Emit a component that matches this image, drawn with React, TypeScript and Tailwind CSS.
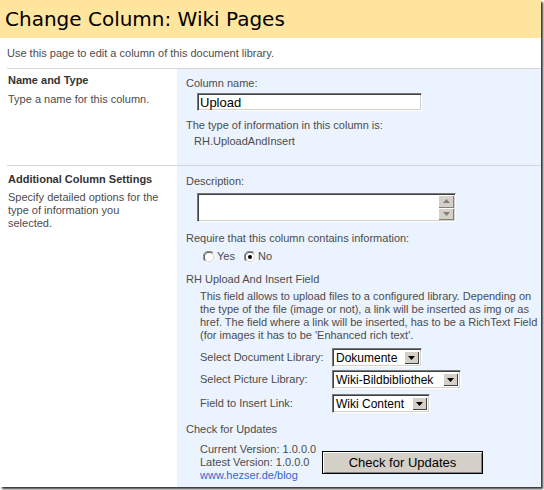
import type { ReactNode } from 'react';

function Radio({ checked = false }: { checked?: boolean }) {
  return (
    <svg width="12" height="12" viewBox="0 0 12 12" className="shrink-0">
      <circle cx="6" cy="6" r="5.5" fill="#fff" />
      <path d="M1.8 10.2 A5.5 5.5 0 0 1 10.2 1.8" fill="none" stroke="#808080" strokeWidth="1" />
      <path d="M2.6 9.4 A4.5 4.5 0 0 1 9.4 2.6" fill="none" stroke="#404040" strokeWidth="1" />
      <path d="M10.2 1.8 A5.5 5.5 0 0 1 1.8 10.2" fill="none" stroke="#ffffff" strokeWidth="1" />
      <path d="M9.4 2.6 A4.5 4.5 0 0 1 2.6 9.4" fill="none" stroke="#d4d0c8" strokeWidth="1" />
      {checked && <circle cx="6" cy="6" r="2" fill="#000" />}
    </svg>
  );
}

function Arrow({ dir = 'down', color = '#000' }: { dir?: 'up' | 'down'; color?: string }) {
  return (
    <svg width="7" height="4" viewBox="0 0 7 4">
      <path d={dir === 'down' ? 'M0 0 H7 L3.5 4 Z' : 'M0 4 H7 L3.5 0 Z'} fill={color} />
    </svg>
  );
}

function Select({ value, width }: { value: string; width: string }) {
  return (
    <div
      className={`${width} h-[19px] flex items-stretch bg-white border border-t-[#7a7a7a] border-l-[#7a7a7a] border-b-white border-r-white shadow-[inset_1px_1px_0_#404040,inset_-1px_-1px_0_#d4d0c8] p-[2px] pl-[3px] font-['Liberation_Sans',Arial,sans-serif] text-[12px] leading-[15px] text-black`}
    >
      <div className="flex-1 whitespace-nowrap">{value}</div>
      <div className="w-[15px] shrink-0 bg-[#d4d0c8] flex items-center justify-center shadow-[inset_1px_1px_0_#fff,inset_-1px_-1px_0_#404040]">
        <Arrow />
      </div>
    </div>
  );
}

function Section({ height, left, children }: { height?: string; left: ReactNode; children: ReactNode }) {
  return (
    <div className={`ml-[7px] border-t border-[#d6d6d6] flex ${height ?? 'flex-1'}`}>
      <div className="w-[170px] pl-[1px]">{left}</div>
      <div className="flex-1 bg-[#ebf3ff] pl-[9px]">{children}</div>
    </div>
  );
}

export default function App() {
  return (
    <div className="w-[544px] h-[490px] bg-white font-['Liberation_Sans',Arial,sans-serif] text-[11px] leading-[13px] text-[#4c4c4c]">
      <div className="w-[541px] h-[487px] flex flex-col bg-white shadow-[2px_2px_2px_rgba(0,0,0,0.8)] overflow-hidden">
        <header className="h-[38px] shrink-0 bg-[#ffe59d] pl-[5px] flex items-center">
          <h1 className="font-['DejaVu_Sans',sans-serif] text-[20px] leading-none text-black">
            Change Column: Wiki Pages
          </h1>
        </header>

        <p className="pl-[7px] pt-[9px] pb-[8px]">Use this page to edit a column of this document library.</p>

        <Section
          height="h-[97px] shrink-0"
          left={
            <div className="pt-[5px]">
              <div className="font-bold text-[#333]">Name and Type</div>
              <div className="mt-[6px]">Type a name for this column.</div>
            </div>
          }
        >
          <div className="pt-[8px]">
            <div>Column name:</div>
            <div className="mt-[3px] ml-[11px] w-[225px] h-[18px] bg-white border border-t-[#7a7a7a] border-l-[#7a7a7a] border-b-white border-r-white shadow-[inset_1px_1px_0_#404040,inset_-1px_-1px_0_#d4d0c8] pl-[2px] pt-[1px] text-[13px] leading-[15px] text-black">
              Upload
            </div>
            <div className="mt-[8px]">The type of information in this column is:</div>
            <div className="mt-[3px] pl-[8px]">RH.UploadAndInsert</div>
          </div>
        </Section>

        <Section
          left={
            <div className="pt-[7px]">
              <div className="font-bold text-[#333]">Additional Column Settings</div>
              <div className="mt-[5px]">
                Specify detailed options for the
                <br />
                type of information you
                <br />
                selected.
              </div>
            </div>
          }
        >
          <div className="pt-[9px]">
            <div>Description:</div>
            <div className="mt-[5px] ml-[11px] w-[259px] h-[29px] flex bg-white border border-t-[#7a7a7a] border-l-[#7a7a7a] border-b-white border-r-white shadow-[inset_1px_1px_0_#404040,inset_-1px_-1px_0_#d4d0c8] p-[1px]">
              <div className="flex-1" />
              <div className="w-[16px] flex flex-col bg-[#d4d0c8]">
                <div className="flex-1 flex items-center justify-center shadow-[inset_1px_1px_0_#fff,inset_-1px_-1px_0_#808080]">
                  <Arrow dir="up" color="#808080" />
                </div>
                <div className="flex-1 flex items-center justify-center shadow-[inset_1px_1px_0_#fff,inset_-1px_-1px_0_#808080]">
                  <Arrow color="#808080" />
                </div>
              </div>
            </div>
            <div className="mt-[10px]">Require that this column contains information:</div>
            <div className="mt-[5px] ml-[17px] flex items-center">
              <Radio />
              <span className="ml-[2px]">Yes</span>
              <span className="ml-[9px]" />
              <Radio checked />
              <span className="ml-[2px]">No</span>
            </div>

            <div className="mt-[10px]">RH Upload And Insert Field</div>
            <div className="mt-[4px] pl-[14px] whitespace-nowrap">
              This field allows to upload files to a configured library. Depending on
              <br />
              the type of the file (image or not), a link will be inserted as img or as
              <br />
              href. The field where a link will be inserted, has to be a RichText Field
              <br />
              (for images it has to be 'Enhanced rich text'.
            </div>

            <div className="pl-[14px]">
              <div className="mt-[6px] flex items-center">
                <div className="w-[132px]">Select Document Library:</div>
                <Select value="Dokumente" width="w-[90px]" />
              </div>
              <div className="mt-[3px] flex items-center">
                <div className="w-[132px]">Select Picture Library:</div>
                <Select value="Wiki-Bildbibliothek" width="w-[129px]" />
              </div>
              <div className="mt-[5px] flex items-center">
                <div className="w-[132px]">Field to Insert Link:</div>
                <Select value="Wiki Content" width="w-[98px]" />
              </div>
            </div>

            <div className="mt-[10px]">Check for Updates</div>
            <div className="mt-[7px] pl-[14px] flex items-center">
              <div className="w-[122px]">
                <div>Current Version: 1.0.0.0</div>
                <div>Latest Version: 1.0.0.0</div>
                <a href="#" className="text-[#3366cc]">www.hezser.de/blog</a>
              </div>
              <button className="w-[161px] h-[23px] bg-[#d4d0c8] border border-black shadow-[inset_1px_1px_0_#fff,inset_-1px_-1px_0_#808080] text-[13px] text-black">
                Check for Updates
              </button>
            </div>
          </div>
        </Section>
      </div>
    </div>
  );
}
